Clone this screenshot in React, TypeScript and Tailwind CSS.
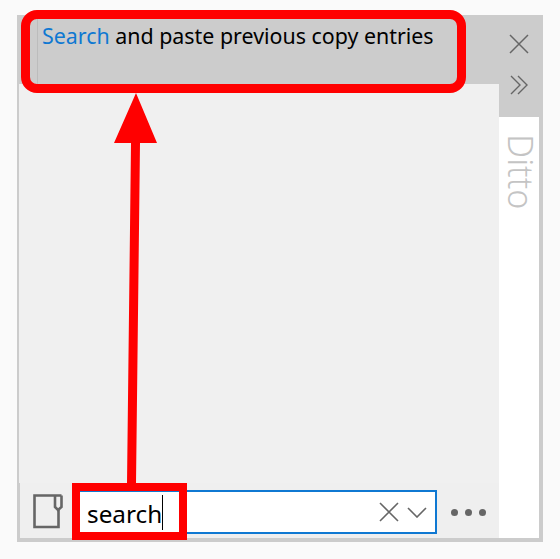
import React from "react";

const App = () => {
  return (
    <div className="relative w-[560px] h-[559px] overflow-hidden bg-[#fafafa] pt-[15px] pl-[17px] font-['Noto_Sans',sans-serif]">
      <div className="flex w-[526px] h-[527px] border-l-2 border-b-[4px] border-r-[4px] border-[#cccccc]">
        <div className="flex flex-col flex-1 bg-[#f0f0f0]">
          <div className="h-[69px] bg-[#cccccc] pl-[18px] pt-[3px]">
            <div className="h-[66px] border-l border-[#bcbcbc] pl-[4px] pt-[1px] text-[21.4px] leading-[34px] text-black whitespace-nowrap">
              <span className="text-[#0f78d2]">Search</span> and paste previous copy entries
            </div>
          </div>
          <div className="flex-1" />
          <div className="flex items-center h-[55px] pl-[13px] bg-[#efefef] border-l border-[#cccccc]">
            <svg width="30" height="35" viewBox="0 0 30 35" fill="none" stroke="#666666" strokeWidth="2.6" className="mt-[2px]">
              <path d="M25.5 16V33H1.5V1.5H28.5" />
              <path d="M22 1.5V13L25 16L28.5 13V1.5" />
            </svg>
            <div className="flex items-center ml-[14px] mt-[3px] w-[360px] h-[44px] border-2 border-[#0f78d2] bg-white">
              <span className="pl-[8px] pt-[3px] text-[24.3px] leading-[36px] text-black">search</span>
              <span className="w-px h-[35px] bg-black" />
              <div className="flex items-center ml-auto mr-[8px] gap-[8px]">
                <svg width="20" height="20" viewBox="0 0 20 20" fill="none" stroke="#666666" strokeWidth="1.6">
                  <path d="M1 1L19 19M19 1L1 19" />
                </svg>
                <svg width="20" height="11" viewBox="0 0 20 11" fill="none" stroke="#666666" strokeWidth="1.6">
                  <path d="M1 1L10 10L19 1" />
                </svg>
              </div>
            </div>
            <div className="flex gap-[7px] ml-[14px] mt-[3px]">
              <span className="w-[7px] h-[7px] rounded-full bg-[#666666]" />
              <span className="w-[7px] h-[7px] rounded-full bg-[#666666]" />
              <span className="w-[7px] h-[7px] rounded-full bg-[#666666]" />
            </div>
          </div>
        </div>
        <div className="flex flex-col w-[40px] bg-white">
          <div className="flex flex-col items-center h-[102px] w-full bg-[#cccccc] pt-[19px] gap-[21px]">
            <svg width="20" height="20" viewBox="0 0 20 20" fill="none" stroke="#666666" strokeWidth="1.5">
              <path d="M1 1L19 19M19 1L1 19" />
            </svg>
            <svg width="18" height="20" viewBox="0 0 18 20" fill="none" stroke="#666666" strokeWidth="1.4">
              <path d="M1 1L10 10L1 19M8 1L17 10L8 19" />
            </svg>
          </div>
          <div className="pl-[5px] pt-[17px] text-[34px] leading-[36px] font-light text-[#c4c4c4] [writing-mode:vertical-rl]">
            Ditto
          </div>
        </div>
      </div>

      {/* red annotations */}
      <div className="absolute left-[21px] top-[10px] w-[445px] h-[83px] border-[9px] border-[#ff0000] rounded-[16px]" />
      <div className="absolute left-[72px] top-[483px] w-[115px] h-[57px] border-[8px] border-[#ff0000]" />
      <svg className="absolute left-0 top-0" width="560" height="559" viewBox="0 0 560 559" fill="#ff0000">
        <path d="M136 93L114 143H131L127 484H136L140 143H157Z" />
      </svg>
    </div>
  );
};

export default App;
